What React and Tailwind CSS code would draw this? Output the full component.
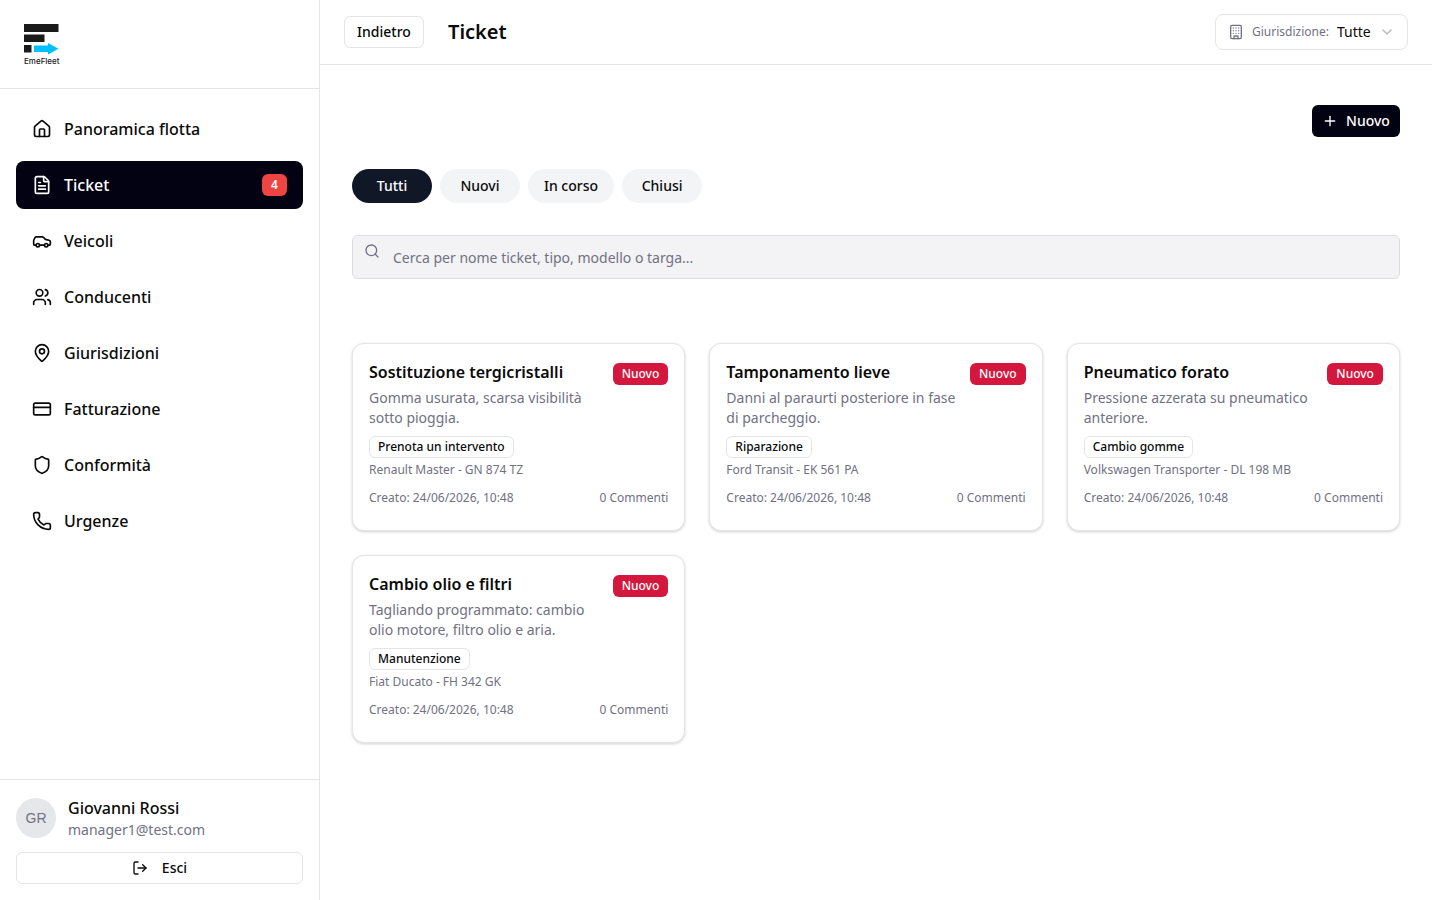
import {
  Building,
  Car,
  ChevronDown,
  CreditCard,
  FileText,
  House,
  LogOut,
  MapPin,
  Phone,
  Plus,
  Search,
  Shield,
  Users,
} from "lucide-react";

const navItems = [
  { label: "Panoramica flotta", icon: House },
  { label: "Ticket", icon: FileText, active: true, badge: 4 },
  { label: "Veicoli", icon: Car },
  { label: "Conducenti", icon: Users },
  { label: "Giurisdizioni", icon: MapPin },
  { label: "Fatturazione", icon: CreditCard },
  { label: "Conformità", icon: Shield },
  { label: "Urgenze", icon: Phone },
];

const tickets = [
  {
    title: "Sostituzione tergicristalli",
    text: "Gomma usurata, scarsa visibilità sotto pioggia.",
    tag: "Prenota un intervento",
    vehicle: "Renault Master - GN 874 TZ",
  },
  {
    title: "Tamponamento lieve",
    text: "Danni al paraurti posteriore in fase di parcheggio.",
    tag: "Riparazione",
    vehicle: "Ford Transit - EK 561 PA",
  },
  {
    title: "Pneumatico forato",
    text: "Pressione azzerata su pneumatico anteriore.",
    tag: "Cambio gomme",
    vehicle: "Volkswagen Transporter - DL 198 MB",
  },
  {
    title: "Cambio olio e filtri",
    text: "Tagliando programmato: cambio olio motore, filtro olio e aria.",
    tag: "Manutenzione",
    vehicle: "Fiat Ducato - FH 342 GK",
  },
];

function Logo() {
  return (
    <div className="flex w-[34px] flex-col items-start">
      <svg width="35" height="31" viewBox="0 0 35 31" aria-hidden="true">
        <rect x="0" y="0" width="34.5" height="8" fill="#1a1a1a" />
        <rect x="0" y="10.5" width="20.5" height="7.5" fill="#1a1a1a" />
        <rect x="0" y="21" width="7.5" height="7.5" fill="#1a1a1a" />
        <path d="M10 21.5H24V19L34.5 24.8L24 30.5V28H10Z" fill="#00bfff" />
      </svg>
      <span className="whitespace-nowrap font-['Inter',sans-serif] text-[8px] leading-[12px] font-medium text-[#1a1a1a]">EmeFleet</span>
    </div>
  );
}

function Sidebar() {
  return (
    <aside className="flex w-80 shrink-0 flex-col border-r border-[#e5e5e5]">
      <div className="h-[89px] border-b border-[#e5e5e5] pt-6 pl-6">
        <Logo />
      </div>
      <nav className="flex flex-1 flex-col gap-2 p-4">
        {navItems.map(({ label, icon: Icon, active, badge }) => (
          <a
            key={label}
            className={
              active
                ? "flex h-12 items-center gap-3 rounded-lg bg-[#030213] px-4 font-medium text-white"
                : "flex h-12 items-center gap-3 rounded-lg px-4 font-medium text-[#0a0a0a]"
            }
          >
            <Icon size={20} strokeWidth={2} />
            <span className="flex-1">{label}</span>
            {badge && (
              <span className="flex h-[22px] w-[25px] items-center justify-center rounded-md bg-[#ef4444] text-xs font-semibold text-white">
                {badge}
              </span>
            )}
          </a>
        ))}
      </nav>
      <div className="border-t border-[#e5e5e5] p-4">
        <div className="flex items-center gap-3">
          <div className="flex size-10 items-center justify-center rounded-full bg-[#e5e7eb] pb-px font-['Liberation_Sans',sans-serif] text-sm text-[#717182]">
            GR
          </div>
          <div>
            <div className="leading-[24px] font-medium text-[#0a0a0a]">Giovanni Rossi</div>
            <div className="text-sm leading-[20px] text-[#717182]">manager1@test.com</div>
          </div>
        </div>
        <button className="mt-3 flex h-8 w-full items-center justify-center gap-3.5 rounded-md border border-[#e5e5e5] text-sm font-medium text-[#0a0a0a]">
          <LogOut size={16} />
          Esci
        </button>
      </div>
    </aside>
  );
}

function Header() {
  return (
    <header className="flex h-[65px] shrink-0 items-center justify-between border-b border-[#e5e5e5] px-6">
      <div className="flex items-center gap-6">
        <button className="h-8 w-20 rounded-md border border-[#e5e5e5] text-sm font-medium text-[#0a0a0a]">
          Indietro
        </button>
        <h1 className="text-xl font-semibold text-[#0a0a0a]">Ticket</h1>
      </div>
      <button className="flex h-9 w-[193px] items-center rounded-lg border border-[#e5e5e5] pr-3 pl-3 text-sm">
        <Building size={16} className="text-[#717182]" />
        <span className="ml-2 text-xs text-[#717182]">Giurisdizione:</span>
        <span className="ml-2 text-sm text-[#0a0a0a]">Tutte</span>
        <ChevronDown size={16} className="ml-auto text-[#717182] opacity-50" />
      </button>
    </header>
  );
}

function TicketCard({ title, text, tag, vehicle }) {
  return (
    <div className="rounded-xl border border-[#e5e5e5] bg-white px-4 pt-4 pb-6 shadow-[0_1px_3px_rgba(0,0,0,0.18)]">
      <div className="flex items-start justify-between gap-3">
        <div className="min-w-0 flex-1">
          <h3 className="leading-[24px] font-semibold text-[#0a0a0a]">{title}</h3>
          <p className="mt-1 text-sm leading-[20px] text-[#717182]">{text}</p>
        </div>
        <span className="mt-[3px] flex h-[22px] w-[55.7px] shrink-0 items-center justify-center rounded-md bg-[#d4183d] text-xs font-medium text-white">
          Nuovo
        </span>
      </div>
      <span className="mt-2 inline-flex h-[22px] items-center rounded-md border border-[#e5e5e5] px-2 text-xs font-medium text-[#0a0a0a]">
        {tag}
      </span>
      <div className="mt-1 text-xs leading-[16px] text-[#717182]">{vehicle}</div>
      <div className="mt-3 flex items-center justify-between text-xs leading-[16px] text-[#717182]">
        <span>Creato: 24/06/2026, 10:48</span>
        <span>0 Commenti</span>
      </div>
    </div>
  );
}

export default function App() {
  return (
    <div className="flex h-screen bg-white pr-2 font-['Noto_Sans',sans-serif]">
      <Sidebar />
      <main className="flex min-w-0 flex-1 flex-col">
        <Header />
        <div className="px-8 pt-10">
          <div className="flex justify-end">
            <button className="flex h-8 w-[88px] items-center justify-center gap-2 rounded-md bg-[#030213] text-sm font-medium text-white">
              <Plus size={16} />
              Nuovo
            </button>
          </div>
          <div className="mt-8 flex gap-2">
            <button className="h-[34px] min-w-20 rounded-full bg-gray-900 px-4 text-sm font-medium text-white">Tutti</button>
            <button className="h-[34px] min-w-20 rounded-full bg-gray-100 px-4 text-sm font-medium text-[#0a0a0a]">Nuovi</button>
            <button className="h-[34px] min-w-20 rounded-full bg-gray-100 px-4 text-sm font-medium text-[#0a0a0a]">In corso</button>
            <button className="h-[34px] min-w-20 rounded-full bg-gray-100 px-4 text-sm font-medium text-[#0a0a0a]">Chiusi</button>
          </div>
          <div className="relative mt-8">
            <Search size={16} className="absolute top-2 left-3 text-[#717182]" />
            <input
              placeholder="Cerca per nome ticket, tipo, modello o targa..."
              className="h-11 w-full rounded-md border border-[#dcdcde] bg-[#f3f3f5] pl-10 text-sm outline-none placeholder:text-[#717182]"
            />
          </div>
          <div className="mt-16 grid grid-cols-3 gap-6">
            {tickets.map((t) => (
              <TicketCard key={t.title} {...t} />
            ))}
          </div>
        </div>
      </main>
    </div>
  );
}
